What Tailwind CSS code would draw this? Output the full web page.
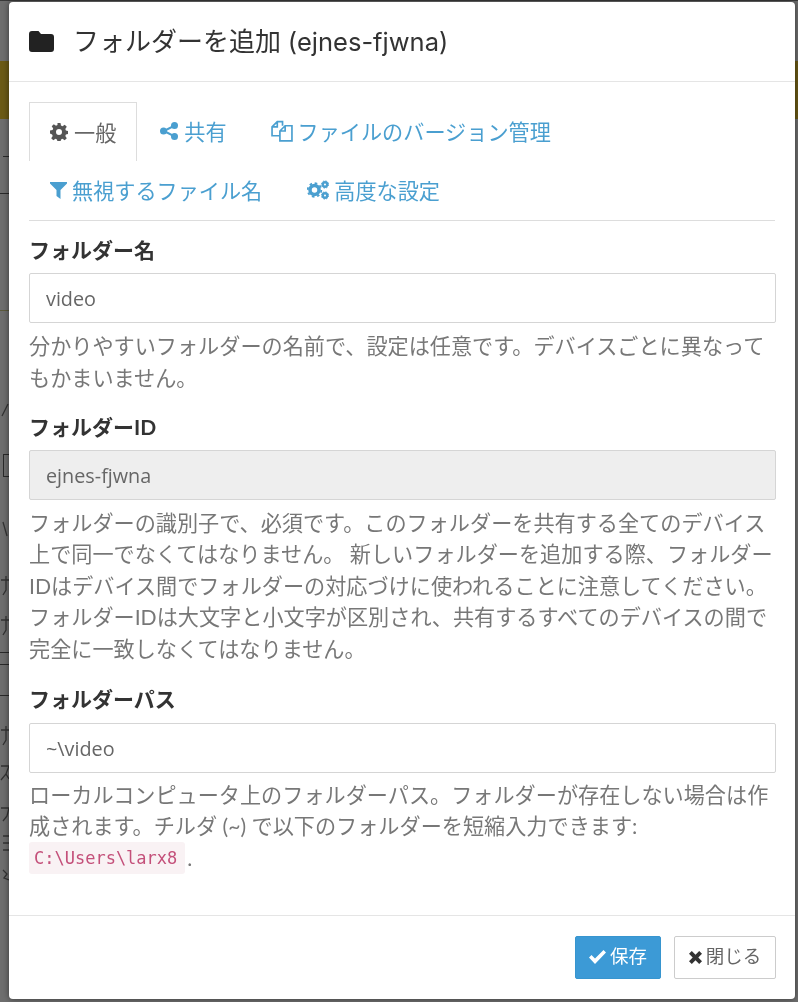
<!DOCTYPE html>
<html lang="ja">
<head>
<meta charset="utf-8">
<script src="https://cdn.jsdelivr.net/npm/@tailwindcss/browser@4"></script>
</head>
<body class="bg-[#6e6e6e] font-['Lato','Noto_Sans_CJK_JP',sans-serif] text-[21.15px] leading-[31.5px] text-[#555]">
<div class="relative h-[1002px] w-[798px] overflow-hidden blur-[0.5px]">
  <div class="absolute left-0 top-0 h-[1px] w-[798px] bg-[#3a3a3a]"></div>
  <div class="absolute left-0 top-[61px] h-[58px] w-[798px] bg-[#6b5a16]"></div>
  <div class="absolute left-[3px] top-[156px] h-[1px] w-[6px] bg-[#2a2a2a]"></div>
  <div class="absolute left-0 top-[193px] h-[1px] w-[9px] bg-[#2a2a2a]"></div>
  <div class="absolute left-0 top-[310px] h-[1px] w-[9px] bg-[#5c5a3c]"></div>
  <div class="absolute left-[3px] top-[454px] h-[23px] w-[10px] border border-[#2a2a2a]"></div>
  <div class="absolute left-0 top-[652px] h-[1px] w-[9px] bg-[#2a2a2a]"></div>
  <div class="absolute left-0 top-[664px] h-[1px] w-[9px] bg-[#2a2a2a]"></div>
  <div class="absolute left-0 top-[695px] h-[1px] w-[9px] bg-[#2a2a2a]"></div>
  <svg class="absolute left-0 top-[400px] h-[500px] w-[9px] fill-none stroke-[#333] stroke-[1.3]" viewBox="0 0 9 500"><path d="M2 16 8 4M3 122l4 14M1 180h8M6 176v14l-3 5M1 220h8M6 216v14l-3 5M1 330h8M6 326v14l-3 5M1 366h8l-3 8-5 6M6 374l3 5M1 408h8l-2 8-4 5M3 436h6M3 443h6M3 450h6M3 470l4 4-3 4 5 2"/></svg>

  <div class="relative ml-[9px] mt-[1.5px] flex h-[997px] w-[786px] flex-col rounded-[4px] bg-white shadow-[0_0_6px_rgba(0,0,0,0.5)]">
    <div class="flex h-[80px] shrink-0 items-center border-b border-[#e5e5e5] pl-[20px]">
      <svg class="mr-[20px] h-[21px] w-[25px] fill-[#222]" viewBox="0 0 25 21"><path d="M3 0h6.500l2.500 3h10a3 3 0 0 1 3 3v12a3 3 0 0 1-3 3H3a3 3 0 0 1-3-3V3a3 3 0 0 1 3-3z"/></svg>
      <h4 class="-ml-[1px] text-[26px] leading-[30px] text-[#333]">フォルダーを追加 <span class="font-['Inter',sans-serif] text-[25.5px]">(ejnes-fjwna)</span></h4>
    </div>
    <div class="flex min-h-0 flex-1 flex-col pl-[20px] pr-[19px] pt-[20px]">
      <ul class="mr-[1px] flex flex-wrap border-b border-[#ddd] text-[#4a9fd0]">
        <li class="-mb-px flex h-[59px] items-center gap-[6px] border border-b-0 border-[#ddd] bg-white px-[20px] text-[#666]">
          <svg class="h-[18px] w-[18px] fill-[#555]" viewBox="0 0 18 18"><path fill-rule="evenodd" d="M7.500 0h3l.5 2.600 1.500.6 2.200-1.500 2.100 2.100-1.500 2.200.6 1.500 2.600.5v3l-2.600.5-.6 1.500 1.500 2.200-2.100 2.100-2.200-1.500-1.500.6-.5 2.600h-3l-.5-2.600-1.500-.6-2.200 1.500-2.100-2.100 1.500-2.200-.6-1.500L0 10.500v-3l2.600-.5.6-1.500-1.500-2.200 2.100-2.100 2.200 1.500 1.500-.6zM9 6a3 3 0 1 0 0 6 3 3 0 0 0 0-6z"/></svg>
          <span class="pt-[4px]">一般</span>
        </li>
        <li class="flex h-[59px] items-center gap-[6px] px-[23px]">
          <svg class="h-[18px] w-[18px] fill-[#4a9fd0]" viewBox="0 0 18 18"><circle cx="3.500" cy="9" r="3.500"/><circle cx="14.500" cy="3.500" r="3.500"/><circle cx="14.500" cy="14.500" r="3.500"/><path d="M3.500 8 14 2.800l1 1.800L4.500 10zM4.500 8 15 13.400 14 15.200 3.500 10z"/></svg>
          <span class="pt-[4px]">共有</span>
        </li>
        <li class="flex h-[59px] items-center gap-[5px] pl-[21px] pr-[22px]">
          <svg class="h-[22px] w-[22px] fill-none stroke-[#4a9fd0] stroke-[1.6]" viewBox="0 0 21 21"><path d="M8 15H1V6.500L6 1.500h5v4M6 1.500V6.500H1M8.500 10.500 13.500 5.500H20V20H8.500zM13.500 5.500v5h-5"/></svg>
          <span class="pt-[4px]">ファイルのバージョン管理</span>
        </li>
        <li class="flex h-[59px] items-center gap-[5px] pl-[21px] pr-[20px]">
          <svg class="h-[18px] w-[17px] fill-[#4a9fd0]" viewBox="0 0 17 18"><path d="M0 1h17v1.500L10.500 9v9L6.500 15V9L0 2.500z"/></svg>
          <span class="pt-[4px]">無視するファイル名</span>
        </li>
        <li class="flex h-[59px] items-center gap-[5px] px-[25px]">
          <svg class="h-[20px] w-[22px] fill-[#4a9fd0]" viewBox="0 0 22 20"><circle cx="7.500" cy="10" r="4.500" fill="none" stroke="#4a9fd0" stroke-width="3.500"/><circle cx="7.500" cy="10" r="6.800" fill="none" stroke="#4a9fd0" stroke-width="1.800" stroke-dasharray="2.600 2.740"/><circle cx="18" cy="4.500" r="2.200" fill="none" stroke="#4a9fd0" stroke-width="2.400"/><circle cx="18" cy="4.500" r="3.600" fill="none" stroke="#4a9fd0" stroke-width="1" stroke-dasharray="1.500 1.330"/><circle cx="18" cy="15.500" r="2.200" fill="none" stroke="#4a9fd0" stroke-width="2.400"/><circle cx="18" cy="15.500" r="3.600" fill="none" stroke="#4a9fd0" stroke-width="1" stroke-dasharray="1.500 1.330"/></svg>
          <span class="pt-[4px]">高度な設定</span>
        </li>
      </ul>
      <div class="pt-[13px]">
        <label class="block text-[21px] font-bold leading-[31.5px] text-[#333]">フォルダー名</label>
        <div class="mt-[8px] flex h-[50px] items-center rounded-[2px] border border-[#d5d5d5] bg-white px-[16px] pt-[2px] font-['Open_Sans','Noto_Sans_CJK_JP',sans-serif] text-[19.8px] text-[#666]">video</div>
        <p class="mt-[8px] text-[#777]">分かりやすいフォルダーの名前で、設定は任意です。デバイスごとに異なってもかまいません。</p>
      </div>
      <div class="pt-[17px]">
        <label class="block text-[21px] font-bold leading-[31.5px] text-[#333]">フォルダーID</label>
        <div class="mt-[7px] flex h-[50px] items-center rounded-[2px] border border-[#d5d5d5] bg-[#eeeeee] px-[16px] pt-[3px] font-['Open_Sans','Noto_Sans_CJK_JP',sans-serif] text-[19.8px] text-[#666]">ejnes-fjwna</div>
        <p class="mt-[8px] text-[#777]">フォルダーの識別子で、必須です。このフォルダーを共有する全てのデバイス上で同一でなくてはなりません。 新しいフォルダーを追加する際、フォルダーIDはデバイス間でフォルダーの対応づけに使われることに注意してください。フォルダーIDは大文字と小文字が区別され、共有するすべてのデバイスの間で完全に一致しなくてはなりません。</p>
      </div>
      <div class="pt-[18px]">
        <label class="block text-[21px] font-bold leading-[31.5px] text-[#333]">フォルダーパス</label>
        <div class="mt-[8px] flex h-[50px] items-center rounded-[2px] border border-[#d5d5d5] bg-white px-[16px] pt-[2px] font-['Open_Sans','Noto_Sans_CJK_JP',sans-serif] text-[19.8px] text-[#666]">~\video</div>
        <p class="mt-[7px] text-[#777]">ローカルコンピュータ上のフォルダーパス。フォルダーが存在しない場合は作成されます。チルダ (~) で以下のフォルダーを短縮入力できます: <code class="mr-[2px] rounded-[3px] bg-[#f9f2f4] py-[6px] pl-[5px] pr-[8px] align-[2px] font-['DejaVu_Sans_Mono',monospace] text-[17px] leading-none text-[#c4507a]">C:\Users\larx8</code>.</p>
      </div>
    </div>
    <div class="flex h-[84px] shrink-0 items-center justify-end gap-[13px] border-t border-[#e5e5e5] pr-[19px]">
      <button class="flex h-[43px] w-[86px] items-center justify-center gap-[4px] rounded-[2px] border border-[#3795cf] bg-[#3c9ad6] text-[18.5px] text-white">
        <svg class="h-[14px] w-[17px] fill-white" viewBox="0 0 17 14"><path d="M0 7.500 2.500 5l3.500 3.500L14.500 0 17 2.500 6 14z"/></svg>
        <span>保存</span>
      </button>
      <button class="flex h-[43px] w-[102px] items-center justify-center gap-[4px] rounded-[2px] border border-[#ccc] bg-white text-[18.5px] text-[#666]">
        <svg class="h-[13px] w-[13px] fill-[#333]" viewBox="0 0 13 13"><path d="M0 2.800 2.800 0l3.700 3.700L10.200 0 13 2.800 9.300 6.500 13 10.200 10.200 13 6.500 9.300 2.800 13 0 10.200 3.700 6.500 0 2.800z"/></svg>
        <span>閉じる</span>
      </button>
    </div>
  </div>
</div>
</body>
</html>
